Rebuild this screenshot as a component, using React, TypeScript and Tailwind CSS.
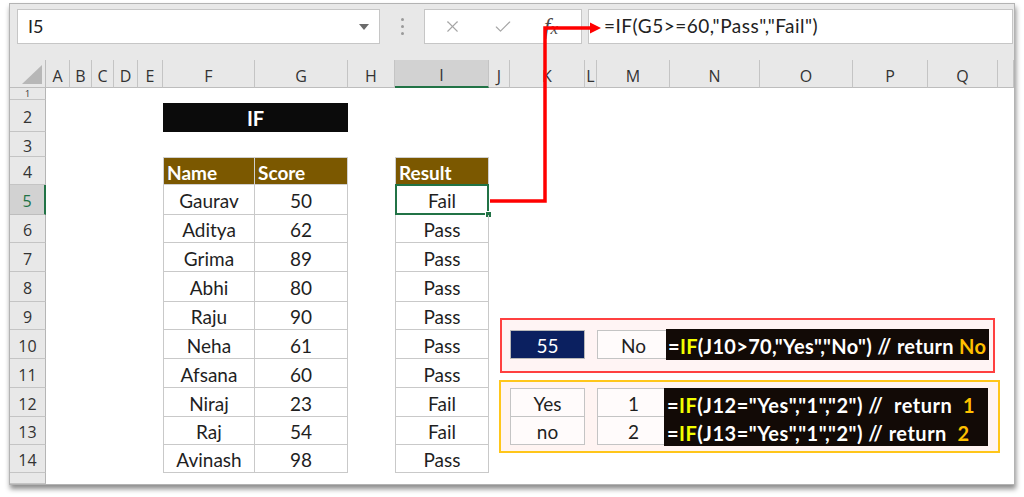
import { X, Check } from 'lucide-react'

const letters = ['A', 'B', 'C', 'D', 'E', 'F', 'G', 'H', 'I', 'J', 'K', 'L', 'M', 'N', 'O', 'P', 'Q', '']

const people: [string, number, string][] = [
  ['Gaurav', 50, 'Fail'],
  ['Aditya', 62, 'Pass'],
  ['Grima', 89, 'Pass'],
  ['Abhi', 80, 'Pass'],
  ['Raju', 90, 'Pass'],
  ['Neha', 61, 'Pass'],
  ['Afsana', 60, 'Pass'],
  ['Niraj', 23, 'Fail'],
  ['Raj', 54, 'Fail'],
  ['Avinash', 98, 'Pass'],
]

const rowNums = [1, 2, 3, 4, 5, 6, 7, 8, 9, 10, 11, 12, 13, 14, 15]

const cellText = 'flex items-center justify-center pt-[2px] text-[19px] text-[#1f1f1f] leading-none'

// one sheet cell; returns null for the G2 slot that the merged IF bar covers
function Cell({ r, col }: { r: number; col: string }) {
  if (r === 2 && col === 'G') return null
  if (r === 2 && col === 'F') {
    return (
      <div className="col-span-2 mt-[3px] flex items-center justify-center bg-[#0b0b0b] text-[20px] font-bold text-white">
        IF
      </div>
    )
  }

  const inTable = (col === 'F' || col === 'G' || col === 'I') && r >= 4 && r <= 14
  if (inTable) {
    const edge = col === 'G' ? 'border-r border-b' : 'border-l border-r border-b'
    const top = r === 4 ? 'border-t' : ''
    if (r === 4) {
      const label = col === 'F' ? 'Name' : col === 'G' ? 'Score' : 'Result'
      return (
        <div className={`${edge} ${top} border-[#cfcfcf] bg-[#7b5800] flex items-center pl-[3px] pt-[2px] text-[19px] font-bold text-white leading-none`}>
          {label}
        </div>
      )
    }
    const p = people[r - 5]
    const val = col === 'F' ? p[0] : col === 'G' ? p[1] : p[2]
    return (
      <div className={`${edge} border-[#c9c9c9] ${cellText} relative`}>
        {val}
        {r === 5 && col === 'I' && (
          <>
            <div className="absolute -inset-[1px] border-2 border-[#217346]" />
            <div className="absolute -right-[4px] -bottom-[4px] h-[7px] w-[7px] border border-white bg-[#217346]" />
          </>
        )}
      </div>
    )
  }

  if (r === 10 && col === 'K') {
    return <div className={`border border-[#b9b9b9] bg-[#0b2060] ${cellText} !text-white`}>55</div>
  }
  if (r === 10 && col === 'M') {
    return <div className={`border border-[#c4c4c4] bg-[#fffbfb] ${cellText}`}>No</div>
  }
  if ((r === 12 || r === 13) && (col === 'K' || col === 'M')) {
    const txt = col === 'K' ? (r === 12 ? 'Yes' : 'no') : r === 12 ? '1' : '2'
    return (
      <div className={`border-l border-r border-b ${r === 12 ? 'border-t' : ''} border-[#c4c4c4] bg-[#fffbfb] ${cellText}`}>
        {txt}
      </div>
    )
  }
  return <div />
}

export default function App() {
  return (
    <div className="min-h-screen bg-white pl-[9px] pt-[3px]" style={{ fontFamily: 'Lato, "Open Sans", sans-serif' }}>
      <div className="relative flex h-[482px] w-[1006px] flex-col border border-[#b3b3b3] bg-white shadow-[1px_4px_5px_rgba(0,0,0,0.45)]">
        {/* formula bar */}
        <div className="flex h-[56px] items-start bg-[#e8e8e8] pl-[7px] pt-[5px]">
          <div className="flex h-[35px] w-[363px] items-center justify-between border border-[#c6c6c6] bg-white pl-[10px] pr-[10px]">
            <span className="text-[18px] text-[#222]">I5</span>
            <svg width="10" height="6" viewBox="0 0 10 6">
              <path d="M0 0 L10 0 L5 6 Z" fill="#6b6b6b" />
            </svg>
          </div>
          <div className="flex h-[35px] w-[44px] flex-col items-center justify-center gap-[4px]">
            <span className="h-[3px] w-[3px] rounded-full bg-[#9a9a9a]" />
            <span className="h-[3px] w-[3px] rounded-full bg-[#9a9a9a]" />
            <span className="h-[3px] w-[3px] rounded-full bg-[#9a9a9a]" />
          </div>
          <div className="flex h-[35px] w-[158px] items-center gap-[31px] border border-[#c6c6c6] bg-white pl-[18px]">
            <X size={19} strokeWidth={1.4} color="#a6a6a6" />
            <Check size={20} strokeWidth={1.4} color="#a6a6a6" />
            <span className="text-[23px] italic leading-none text-[#4a4a4a]" style={{ fontFamily: '"Liberation Serif", serif' }}>
              f<span className="text-[17px]">x</span>
            </span>
          </div>
          <div className="ml-[6px] mr-[1px] flex h-[35px] flex-1 items-center border border-[#c6c6c6] bg-white pl-[15px] text-[19px] tracking-[0.5px] text-[#222]">
            =IF(G5&gt;=60,"Pass","Fail")
          </div>
        </div>

        {/* floating frames behind the cells */}
        <div className="absolute left-[490px] top-[314px] h-[55px] w-[495px] border-2 border-[#ff4040] bg-[#fff4f4]" />
        <div className="absolute left-[489px] top-[376px] h-[73px] w-[501px] border-2 border-[#ffc61a] bg-[#fff4f2]" />

        {/* sheet */}
        <div className="relative grid grid-cols-[36px_24px_22px_22px_24px_25px_92px_93px_47px_94px_21px_75px_12px_73px_90px_93px_75px_70px_16px] grid-rows-[28px_12px_32px_25px_28px_30px_28px_29px_30px_28px_29px_29px_29px_28px_28px_11px]">
          <div className="relative border-b border-r border-[#bdbdbd] bg-[#e8e8e8]">
            <svg className="absolute bottom-[3px] right-[3px]" width="20" height="19" viewBox="0 0 20 19">
              <path d="M20 0 L20 19 L0 19 Z" fill="#b7b7b7" />
            </svg>
          </div>
          {letters.map((l, i) => (
            <div
              key={i}
              className={`flex items-center justify-center pt-[4px] text-[16px] text-[#333] ${
                l === 'I'
                  ? 'border-b-2 border-r border-b-[#217346] border-r-[#c4c4c4] bg-[#d2d2d2]'
                  : 'border-b border-r border-b-[#bdbdbd] border-r-[#c4c4c4] bg-[#e8e8e8]'
              }`}
              style={{ fontFamily: '"Open Sans", sans-serif' }}
            >
              {l}
            </div>
          ))}
          {rowNums.map((r) => (
            <Row key={r} r={r} />
          ))}
        </div>

        {/* formula text boxes */}
        <div className="absolute left-[656px] top-[325px] flex h-[31px] w-[323px] items-center whitespace-nowrap bg-[#120a06] pl-[2px] pt-[2px] text-[20px] font-bold leading-none tracking-[0.3px] text-white">
          =<span className="text-[#f2ff00]">IF</span>(J10&gt;70,"Yes","No") // return&nbsp;<span className="text-[#ffc000]">No</span>
        </div>
        <div className="absolute left-[654px] top-[384px] flex h-[58px] w-[324px] flex-col whitespace-nowrap bg-[#120a06] pl-[3px] pt-[2px] text-[20px] font-bold leading-none tracking-[0.5px] text-white">
          <div className="flex h-[29px] items-center">
            =<span className="text-[#f2ff00]">IF</span>(J12="Yes","1","2") //&nbsp;&nbsp;return&nbsp;&nbsp;<span className="text-[#ffc000]">1</span>
          </div>
          <div className="flex h-[27px] items-center">
            =<span className="text-[#f2ff00]">IF</span>(J13="Yes","1","2") // return&nbsp;&nbsp;<span className="text-[#ffc000]">2</span>
          </div>
        </div>

        {/* red pointer arrow */}
        <svg className="pointer-events-none absolute left-0 top-0" width="1004" height="480" viewBox="0 0 1004 480">
          <path d="M480 197 L535 197 L535 24 L582 24" fill="none" stroke="#ff0000" strokeWidth="3.5" />
          <path d="M580 18.5 L591 24 L580 29.5 Z" fill="#ff0000" />
        </svg>
      </div>
    </div>
  )
}

function Row({ r }: { r: number }) {
  const sel = r === 5
  return (
    <>
      <div
        className={`flex justify-center overflow-hidden text-[16px] ${r === 1 ? 'items-center' : 'items-center pt-[3px]'} ${
          sel
            ? 'border-b border-r-2 border-b-[#bdbdbd] border-r-[#217346] bg-[#d2d2d2] text-[#217346]'
            : 'border-b border-r border-b-[#c4c4c4] border-r-[#b5b5b5] bg-[#e8e8e8] text-[#333]'
        }`}
        style={{ fontFamily: '"Open Sans", sans-serif' }}
      >
        {r === 1 ? <span className="text-[9px] leading-[9px]">1</span> : r === 15 ? '' : r}
      </div>
      {letters.map((l, i) => (
        <Cell key={i} r={r} col={l} />
      ))}
    </>
  )
}
